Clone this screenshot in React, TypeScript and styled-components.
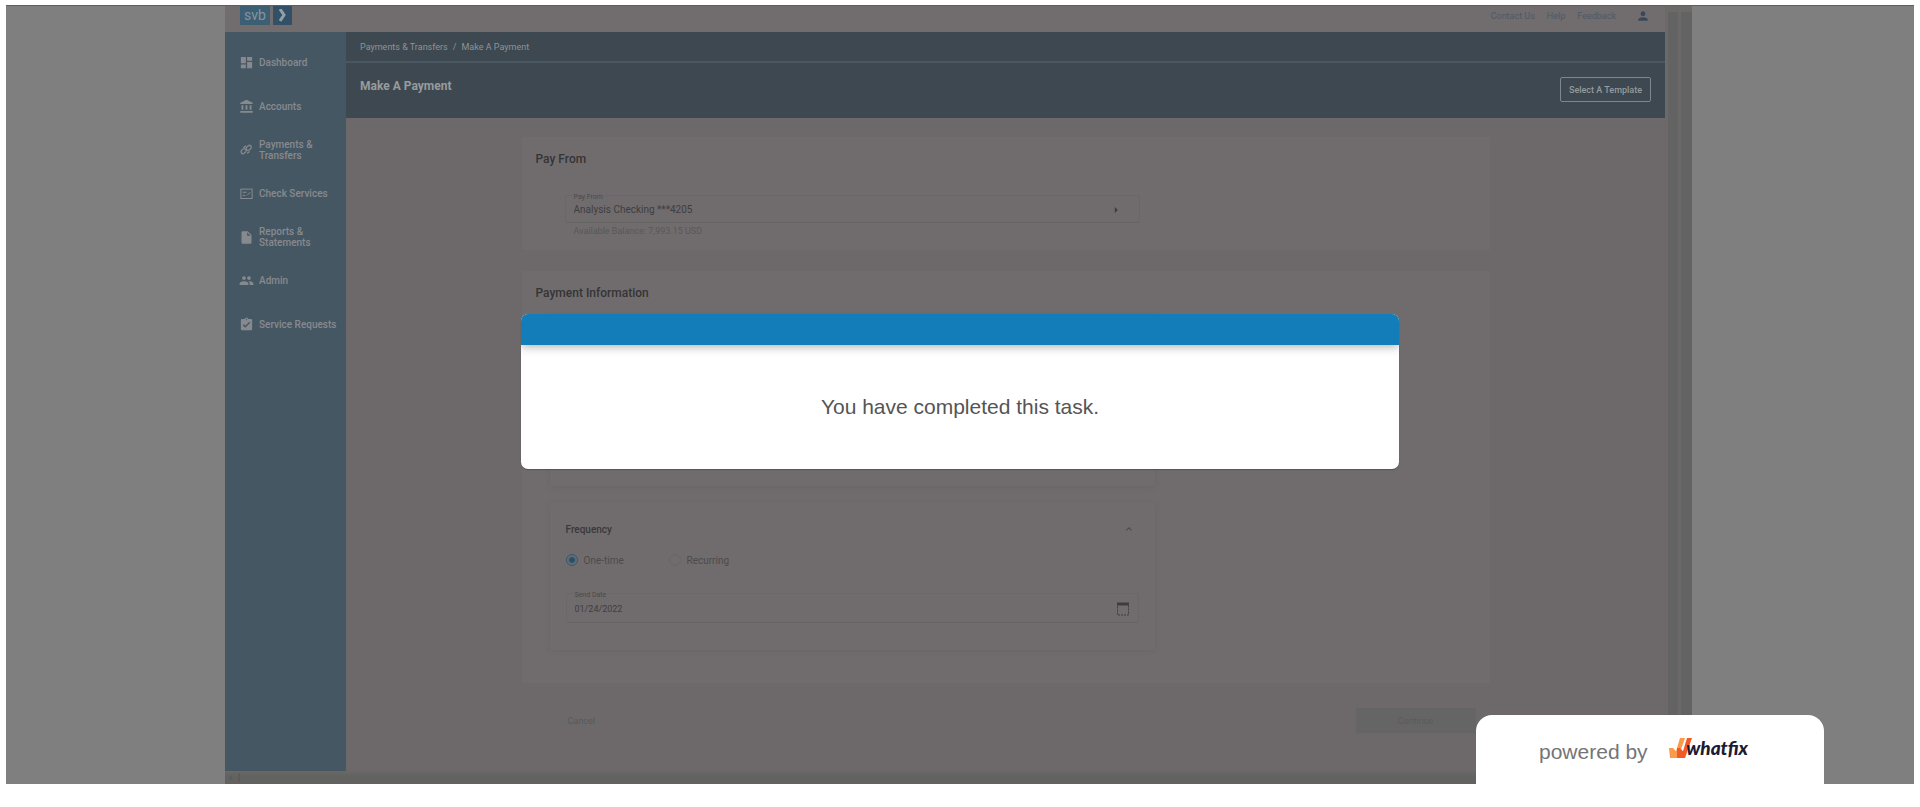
import React from "react";
import styled, { createGlobalStyle } from "styled-components";
import {
  MdDashboard,
  MdAccountBalance,
  MdInsertDriveFile,
  MdPeople,
  MdPerson,
  MdAssignmentTurnedIn,
  MdKeyboardArrowUp,
  MdArrowRight,
} from "react-icons/md";

const Global = createGlobalStyle`
  *, *::before, *::after { box-sizing: border-box; }
  body { margin: 0; background: #fff; font-family: Roboto, "Liberation Sans", sans-serif; }
  h1, h2, h3, p, ul { margin: 0; padding: 0; }
  button, input, select { font-family: inherit; margin: 0; }
  a { color: inherit; text-decoration: none; }
`;

const Page = styled.div`
  min-height: 100vh;
  padding: 6px 6px 23px;
  display: flex;
`;

const Stage = styled.div`
  position: relative;
  flex: 1;
  display: flex;
  padding: 0 222px 0 219px;
  background: #7f7f7f;
  overflow: hidden;
  box-shadow: 0 -1px 0 #5e5e5e;
`;

const Browser = styled.div`
  flex: 1;
  min-width: 0;
  display: flex;
  flex-direction: column;
`;

const Viewport = styled.div`
  flex: 1;
  display: flex;
`;

const Site = styled.div`
  flex: 1;
  min-width: 0;
  display: flex;
  flex-direction: column;
`;

const Tracks = styled.div`
  display: flex;
  gap: 3px;
  padding: 6px 0 0 3px;
  background: #6b6a69;
`;

const Track = styled.div<{ $width: number }>`
  width: ${(p) => p.$width}px;
  background: #636363;
`;

const BottomTrack = styled.div`
  height: 13px;
  padding-left: 4px;
  background: linear-gradient(#6a6969, #626261 5px);
  display: flex;
  align-items: center;
  gap: 6px;
  color: #545454;
  font-size: 10px;
  line-height: 12px;
`;

const TopBar = styled.header`
  height: 26px;
  padding: 0 15px;
  background: #716c6d;
  display: flex;
  justify-content: space-between;
  align-items: flex-start;
`;

const Logo = styled.a`
  display: flex;
  gap: 3px;
`;

const LogoName = styled.span`
  width: 30px;
  height: 19px;
  background: #3d5f74;
  color: #84959f;
  font-size: 14px;
  line-height: 18px;
  text-align: center;
`;

const LogoArrow = styled.span`
  width: 19px;
  height: 19px;
  background: #345066;
  display: flex;
  align-items: center;
  justify-content: center;
`;

const TopLinks = styled.nav`
  display: flex;
  align-items: center;
  gap: 12px;
  height: 19px;
  color: #4d5a68;
  font-size: 9px;
`;

const Profile = styled.a`
  display: flex;
  margin-left: 8px;
  color: #35495a;
  font-size: 14px;
`;

const Body = styled.div`
  flex: 1;
  display: flex;
`;

const Sidebar = styled.nav`
  width: 121px;
  flex: none;
  padding-top: 9px;
  background: #465764;
`;

const Menu = styled.ul`
  height: 305px;
  display: flex;
  flex-direction: column;
  list-style: none;
`;

const MenuItem = styled.li`
  flex: 1;
  display: flex;
`;

const MenuLink = styled.a`
  flex: 1;
  display: flex;
  align-items: center;
  gap: 5px;
  padding-left: 14px;
  color: #868a8e;
  font-size: 10px;
  font-weight: 500;
  line-height: 11px;

  svg {
    flex: none;
    width: 15px;
    height: 15px;
  }
`;

const Content = styled.main`
  flex: 1;
  min-width: 0;
  background: #6d696a;
`;

const Crumbs = styled.nav`
  height: 31px;
  padding-left: 14px;
  background: #3d4850;
  border-bottom: 2px solid #4a5760;
  display: flex;
  align-items: center;
  gap: 5px;
  color: #8f9397;
  font-size: 9px;
  font-weight: 400;
`;

const TitleBand = styled.div`
  height: 55px;
  padding: 14px 14px 0;
  background: #3d4850;
  display: flex;
  justify-content: space-between;
  align-items: flex-start;
`;

const Title = styled.h1`
  color: #989b9e;
  font-size: 12px;
  font-weight: 700;
  line-height: 18px;
`;

const TemplateButton = styled.button`
  width: 91px;
  height: 25px;
  padding: 0;
  background: transparent;
  border: 1px solid #7f878c;
  border-radius: 2px;
  color: #969a9d;
  font-size: 9px;
  font-weight: 500;
`;

const Column = styled.form`
  max-width: 968px;
  margin: 0 auto;
  padding-top: 19px;
`;

const Card = styled.section<{ $bottom: number }>`
  padding: 14px 14px ${(p) => p.$bottom}px;
  background: #706c6d;
  margin-bottom: 21px;
`;

const CardTitle = styled.h2`
  color: #353435;
  font-size: 12px;
  font-weight: 500;
  line-height: 16px;
`;

const FromGroup = styled.div`
  width: 575px;
  margin: 28px 0 0 29px;
`;

const Field = styled.div<{ $height: number }>`
  position: relative;
  height: ${(p) => p.$height}px;
  border: 1px solid #6b6768;
  border-bottom-color: #666363;
  border-radius: 3px;
  display: flex;
  align-items: center;
  padding: 2px 8px 0;
  color: #3e3c3d;
`;

const FieldLabel = styled.label`
  position: absolute;
  top: -4px;
  left: 6px;
  padding: 0 2px;
  background: #706c6d;
  color: #4b494a;
  font-size: 7px;
  line-height: 10px;
`;

const fieldText = `
  flex: 1;
  min-width: 0;
  padding: 0;
  border: 0;
  outline: 0;
  background: transparent;
  color: #3f3d3e;
  line-height: 14px;
`;

const Select = styled.select`
  ${fieldText}
  appearance: none;
  font-size: 10px;
`;

const Input = styled.input`
  ${fieldText}
  font-size: 9px;
`;

const SelectArrow = styled(MdArrowRight)`
  width: 14px;
  height: 14px;
  margin-right: 8px;
`;

const Helper = styled.p`
  margin-top: 2px;
  padding-left: 9px;
  color: #595758;
  font-size: 9px;
  line-height: 12px;
`;

const Panel = styled.section`
  width: 605px;
  margin-left: 14px;
  padding: 19px 16px 27px;
  background: #706c6d;
  box-shadow: 0 1px 5px rgba(80, 76, 77, 0.22);
`;

const RecipientPanel = styled(Panel)`
  height: 171px;
  margin-top: 14px;
  margin-bottom: 17px;
`;

const PanelHead = styled.div`
  display: flex;
  justify-content: space-between;
  align-items: center;
  height: 14px;
  padding-right: 4px;
  color: #4b494a;
`;

const PanelTitle = styled.h3`
  color: #3a3839;
  font-size: 10px;
  font-weight: 500;
`;

const Radios = styled.div`
  display: flex;
  margin: 17px 0 26px;
`;

const RadioLabel = styled.label`
  display: flex;
  align-items: center;
  gap: 6px;
  width: 103px;
  height: 14px;
  color: #4c4a4b;
  font-size: 10px;
`;

const Radio = styled.input`
  appearance: none;
  width: 12px;
  height: 12px;
  border: 1px solid #6a6667;
  border-radius: 50%;

  &:checked {
    border-color: #2c5a76;
    background: radial-gradient(circle, #23506c 2px, transparent 4px);
  }
`;

const Actions = styled.div`
  display: flex;
  align-items: center;
  justify-content: space-between;
  margin-top: 25px;
  padding: 0 14px 38px 46px;
`;

const Cancel = styled.a`
  color: #535a5e;
  font-size: 9px;
`;

const Continue = styled.button`
  width: 120px;
  height: 25px;
  border: 0;
  border-radius: 2px;
  background: #666566;
  color: #5a5a5b;
  font-size: 9px;
`;

const Overlay = styled.div`
  position: absolute;
  inset: 308px 0 auto;
  display: flex;
  justify-content: center;
`;

const Dialog = styled.div`
  width: 46%;
  border-radius: 7px;
  overflow: hidden;
  background: #fff;
  box-shadow: 0 1px 1px rgba(60, 60, 60, 0.5);
`;

const DialogBar = styled.div`
  height: 31px;
  background: #127db9;
  box-shadow: 0 2px 10px rgba(0, 0, 0, 0.3);
`;

const DialogText = styled.p`
  height: 124px;
  display: flex;
  align-items: center;
  justify-content: center;
  color: #555;
  font-family: "Liberation Sans", Arial, sans-serif;
  font-size: 21px;
  line-height: 24px;
`;

const Badge = styled.a`
  position: absolute;
  right: 90px;
  bottom: 0;
  width: 348px;
  height: 69px;
  padding: 4px 76px 0 63px;
  border-radius: 16px 16px 0 0;
  background: #fff;
  display: flex;
  align-items: center;
  justify-content: space-between;
  color: #757575;
  font-family: "Liberation Sans", Arial, sans-serif;
  font-size: 21px;
  line-height: 24px;
`;

const Brand = styled.span`
  display: flex;
  align-items: center;
  height: 32px;
  padding-bottom: 8px;
  color: #1e1a34;
  font-family: Lato, "Open Sans", sans-serif;
  font-size: 19px;
  font-style: italic;
  font-weight: 900;
  line-height: 20px;
`;

const BrandMark = styled.svg`
  width: 23px;
  height: 20px;
  margin-right: -6px;
`;

function LinkIcon() {
  return (
    <svg viewBox="0 0 24 24" fill="none" stroke="currentColor" strokeWidth="2">
      <rect x="3" y="12" width="9" height="6" rx="3" transform="rotate(-40 7 15)" />
      <rect x="11" y="6" width="9" height="6" rx="3" transform="rotate(-40 16 9)" />
      <path d="M7 9l4-3M13 18l4-3" />
    </svg>
  );
}

function CheckIcon() {
  return (
    <svg viewBox="0 0 24 24" fill="none" stroke="currentColor" strokeWidth="1.6">
      <rect x="3" y="5" width="18" height="15" />
      <path d="M6 10h6M6 15h4M13 15l5-5" />
    </svg>
  );
}

function CalendarIcon() {
  return (
    <svg width="14" height="14" viewBox="0 0 14 14" fill="none" stroke="currentColor" aria-hidden="true">
      <path d="M1.500 2.500h11v10.500h-11z" strokeDasharray="2 1" />
      <path d="M1 2h12" strokeWidth="3" />
    </svg>
  );
}

const menu: { label: string; icon: React.ReactNode }[] = [
  { label: "Dashboard", icon: <MdDashboard /> },
  { label: "Accounts", icon: <MdAccountBalance /> },
  { label: "Payments &\nTransfers", icon: <LinkIcon /> },
  { label: "Check Services", icon: <CheckIcon /> },
  { label: "Reports &\nStatements", icon: <MdInsertDriveFile /> },
  { label: "Admin", icon: <MdPeople /> },
  { label: "Service Requests", icon: <MdAssignmentTurnedIn /> },
];

const MenuText = styled.span`
  white-space: pre;
`;

export default function App() {
  return (
    <Page>
      <Global />
      <Stage>
        <Browser>
          <Viewport>
            <Site>
              <TopBar>
                <Logo href="#home">
                  <LogoName>svb</LogoName>
                  <LogoArrow>
                    <svg width="8" height="13" viewBox="0 0 8 13" fill="none" stroke="#8fa0aa" strokeWidth="3">
                      <path d="M1 0l4 6-4 6" />
                    </svg>
                  </LogoArrow>
                </Logo>
                <TopLinks>
                  <a href="#contact">Contact Us</a>
                  <a href="#help">Help</a>
                  <a href="#feedback">Feedback</a>
                  <Profile href="#profile" aria-label="Profile">
                    <MdPerson />
                  </Profile>
                </TopLinks>
              </TopBar>
              <Body>
                <Sidebar>
                  <Menu>
                    {menu.map((item) => (
                      <MenuItem key={item.label}>
                        <MenuLink href="#menu">
                          {item.icon}
                          <MenuText>{item.label}</MenuText>
                        </MenuLink>
                      </MenuItem>
                    ))}
                  </Menu>
                </Sidebar>
                <Content>
                  <Crumbs>
                    <a href="#payments">Payments &amp; Transfers</a>
                    <span>/</span>
                    <span>Make A Payment</span>
                  </Crumbs>
                  <TitleBand>
                    <Title>Make A Payment</Title>
                    <TemplateButton type="button">Select A Template</TemplateButton>
                  </TitleBand>
                  <Column>
                    <Card $bottom={13}>
                      <CardTitle>Pay From</CardTitle>
                      <FromGroup>
                        <Field $height={28}>
                          <FieldLabel htmlFor="from">Pay From</FieldLabel>
                          <Select id="from">
                            <option>Analysis Checking ***4205</option>
                          </Select>
                          <SelectArrow />
                        </Field>
                        <Helper>Available Balance: 7,993.15 USD</Helper>
                      </FromGroup>
                    </Card>
                    <Card $bottom={33}>
                      <CardTitle>Payment Information</CardTitle>
                      <RecipientPanel />
                      <Panel>
                        <PanelHead>
                          <PanelTitle>Frequency</PanelTitle>
                          <MdKeyboardArrowUp size={12} />
                        </PanelHead>
                        <Radios>
                          <RadioLabel>
                            <Radio type="radio" name="frequency" defaultChecked />
                            One-time
                          </RadioLabel>
                          <RadioLabel>
                            <Radio type="radio" name="frequency" />
                            Recurring
                          </RadioLabel>
                        </Radios>
                        <Field $height={30}>
                          <FieldLabel htmlFor="date">Send Date</FieldLabel>
                          <Input id="date" defaultValue="01/24/2022" />
                          <CalendarIcon />
                        </Field>
                      </Panel>
                    </Card>
                    <Actions>
                      <Cancel href="#cancel">Cancel</Cancel>
                      <Continue type="button">Continue</Continue>
                    </Actions>
                  </Column>
                </Content>
              </Body>
            </Site>
            <Tracks>
              <Track $width={10} />
              <Track $width={11} />
            </Tracks>
          </Viewport>
          <BottomTrack>
            <span>‹</span>
            <span>|</span>
          </BottomTrack>
        </Browser>
        <Overlay>
          <Dialog role="dialog" aria-label="Task completed">
            <DialogBar />
            <DialogText>You have completed this task.</DialogText>
          </Dialog>
        </Overlay>
        <Badge href="#whatfix">
          powered by
          <Brand>
            <BrandMark viewBox="0 0 23 18" preserveAspectRatio="none" aria-hidden="true">
              <path d="M0 9H4L7 12 11 0H16L9 18H1z" fill="#fb9a4b" />
              <path d="M8 9H11L14 12 18 0H23L16 18H8z" fill="#f15a24" />
            </BrandMark>
            whatfix
          </Brand>
        </Badge>
      </Stage>
    </Page>
  );
}
